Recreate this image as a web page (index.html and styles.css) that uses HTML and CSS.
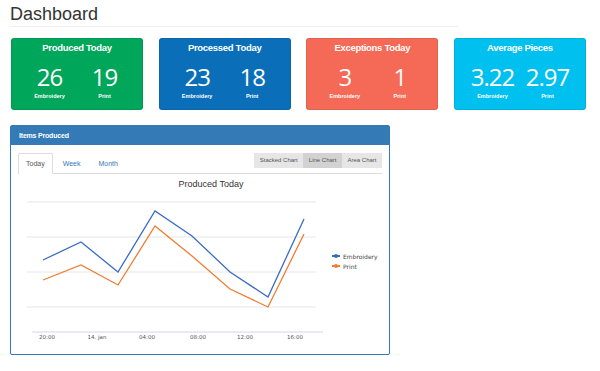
FILE: index.html
```html
<!DOCTYPE html>
<html lang="en">
<head>
    <meta charset="UTF-8">
    <title>Dashboard</title>
    <link rel="stylesheet" href="styles.css">
</head>
<body>
    <div class="page">
        <h1 class="page-title">Dashboard</h1>

        <div class="stats">
            <div class="stat stat-green">
                <div class="stat-title">Produced Today</div>
                <div class="stat-cols">
                    <div class="stat-col"><div class="stat-num">26</div><div class="stat-label">Embroidery</div></div>
                    <div class="stat-col"><div class="stat-num">19</div><div class="stat-label">Print</div></div>
                </div>
            </div>
            <div class="stat stat-blue">
                <div class="stat-title">Processed Today</div>
                <div class="stat-cols">
                    <div class="stat-col"><div class="stat-num">23</div><div class="stat-label">Embroidery</div></div>
                    <div class="stat-col"><div class="stat-num">18</div><div class="stat-label">Print</div></div>
                </div>
            </div>
            <div class="stat stat-red">
                <div class="stat-title">Exceptions Today</div>
                <div class="stat-cols">
                    <div class="stat-col"><div class="stat-num">3</div><div class="stat-label">Embroidery</div></div>
                    <div class="stat-col"><div class="stat-num">1</div><div class="stat-label">Print</div></div>
                </div>
            </div>
            <div class="stat stat-aqua">
                <div class="stat-title">Average Pieces</div>
                <div class="stat-cols">
                    <div class="stat-col"><div class="stat-num">3.22</div><div class="stat-label">Embroidery</div></div>
                    <div class="stat-col"><div class="stat-num">2.97</div><div class="stat-label">Print</div></div>
                </div>
            </div>
        </div>

        <div class="panel">
            <div class="panel-heading">Items Produced</div>
            <div class="panel-body">
                <div class="chart-nav">
                    <ul class="tabs">
                        <li class="active">Today</li>
                        <li>Week</li>
                        <li>Month</li>
                    </ul>
                    <div class="btn-group">
                        <span class="btn">Stacked Chart</span>
                        <span class="btn active">Line Chart</span>
                        <span class="btn">Area Chart</span>
                    </div>
                </div>

                <svg class="chart" width="364" height="175" viewBox="0 0 364 175">
                    <text class="chart-title" x="193" y="13" text-anchor="middle">Produced Today</text>

                    <g class="grid">
                        <line x1="9" y1="28" x2="298" y2="28"/>
                        <line x1="9" y1="63" x2="298" y2="63"/>
                        <line x1="9" y1="98" x2="298" y2="98"/>
                        <line x1="9" y1="133" x2="298" y2="133"/>
                    </g>
                    <line class="axis" x1="14" y1="158" x2="305" y2="158"/>

                    <g class="xlabels" text-anchor="middle">
                        <text x="29" y="165">20:00</text>
                        <text x="79" y="165">14. jan</text>
                        <text x="129" y="165">04:00</text>
                        <text x="180" y="165">08:00</text>
                        <text x="227" y="165">12:00</text>
                        <text x="277" y="165">16:00</text>
                    </g>

                    <polyline class="series-emb" points="25,86 63,68 100,98 137,37 174,62 212,98 250,123 286,45"/>
                    <polyline class="series-print" points="25,106 63,91 100,111 137,52 174,82 212,115 250,133 286,60"/>

                    <g class="legend">
                        <line class="series-emb" x1="314" y1="82" x2="322" y2="82"/>
                        <circle cx="318" cy="82" r="2" fill="#3a6cc4"/>
                        <text x="325" y="84.5">Embroidery</text>
                        <line class="series-print" x1="314" y1="92" x2="322" y2="92"/>
                        <circle cx="318" cy="92" r="2" fill="#ee7d33"/>
                        <text x="325" y="94.5">Print</text>
                    </g>
                </svg>
            </div>
        </div>
    </div>
</body>
</html>
```

FILE: styles.css
```css
body {
    margin: 0;
    background: #fff;
    font-family: "Liberation Sans", Arial, sans-serif;
    color: #333;
}
.page {
    padding: 4px 10px 0 10px;
}
.page-title {
    width: 448px;
    margin: 0 0 11px 0;
    padding-bottom: 2px;
    font-size: 18px;
    font-weight: normal;
    line-height: 20px;
    border-bottom: 1px solid #eee;
}

/* stat boxes */
.stats {
    display: flex;
    gap: 15.67px;
    margin-left: 1px;
}
.stat {
    width: 132px;
    height: 72px;
    box-sizing: border-box;
    padding: 3px 10px 0 10px;
    border-radius: 3px;
    border: 1px solid rgba(0, 0, 0, 0.08);
    color: #fff;
    text-align: center;
}
.stat-green { background: #00a65a; }
.stat-blue { background: #0a6fb8; }
.stat-red { background: #f46a56; }
.stat-aqua { background: #00c0ef; }
.stat-title {
    font-size: 9.5px;
    font-weight: bold;
    line-height: 12px;
    letter-spacing: -0.3px;
}
.stat-cols {
    display: flex;
    margin-top: 10px;
}
.stat-col {
    flex: 1;
}
.stat-num {
    font-family: "Open Sans", sans-serif;
    font-size: 24px;
    line-height: 26px;
    letter-spacing: -1px;
}
.stat-label {
    margin-top: 2px;
    font-size: 5.5px;
    font-weight: bold;
    line-height: 8px;
}

/* chart panel */
.panel {
    width: 380px;
    box-sizing: border-box;
    margin-top: 15px;
    border: 1px solid #337ab7;
    border-radius: 2px;
    box-shadow: 0 1px 2px rgba(0, 0, 0, 0.08);
}
.panel-heading {
    height: 19px;
    line-height: 19px;
    padding-left: 8px;
    background: #337ab7;
    color: #fff;
    font-size: 7px;
    font-weight: bold;
    letter-spacing: -0.2px;
}
.panel-body {
    padding: 8px 7px 5px 7px;
}
.chart-nav {
    display: flex;
    justify-content: space-between;
    align-items: flex-start;
    height: 20px;
    border-bottom: 1px solid #ddd;
}
.tabs {
    display: flex;
    gap: 2px;
    margin: 0;
    padding: 0;
    list-style: none;
}
.tabs li {
    height: 20px;
    line-height: 20px;
    padding: 0 7px;
    font-size: 7px;
    color: #337ab7;
    border: 1px solid transparent;
    border-bottom: none;
    border-radius: 2px 2px 0 0;
    box-sizing: border-box;
}
.tabs li.active {
    height: 21px;
    color: #555;
    background: #fff;
    border-color: #ddd;
}
.btn-group {
    display: flex;
}
.btn {
    height: 15px;
    line-height: 15px;
    padding: 0 5.5px;
    font-size: 6px;
    color: #555;
    background: #e6e6e6;
}
.btn.active {
    background: #d2d2d2;
}

.chart {
    display: block;
    font-family: "Liberation Sans", Arial, sans-serif;
}
.chart-title {
    font-size: 9px;
    fill: #333;
}
.grid line {
    stroke: #e6e6e6;
    stroke-width: 1;
}
.axis {
    stroke: #ccd6eb;
    stroke-width: 1;
}
.xlabels text {
    font-family: "DejaVu Sans", sans-serif;
    font-size: 5.5px;
    fill: #555;
}
.series-emb,
.series-print {
    fill: none;
    stroke-width: 1.3;
    stroke-linejoin: miter;
}
.series-emb { stroke: #3a6cc4; }
.series-print { stroke: #ee7d33; }
.legend text {
    font-family: "DejaVu Sans", sans-serif;
    font-size: 6px;
    fill: #444;
}
.legend line {
    stroke-width: 2;
}
```
